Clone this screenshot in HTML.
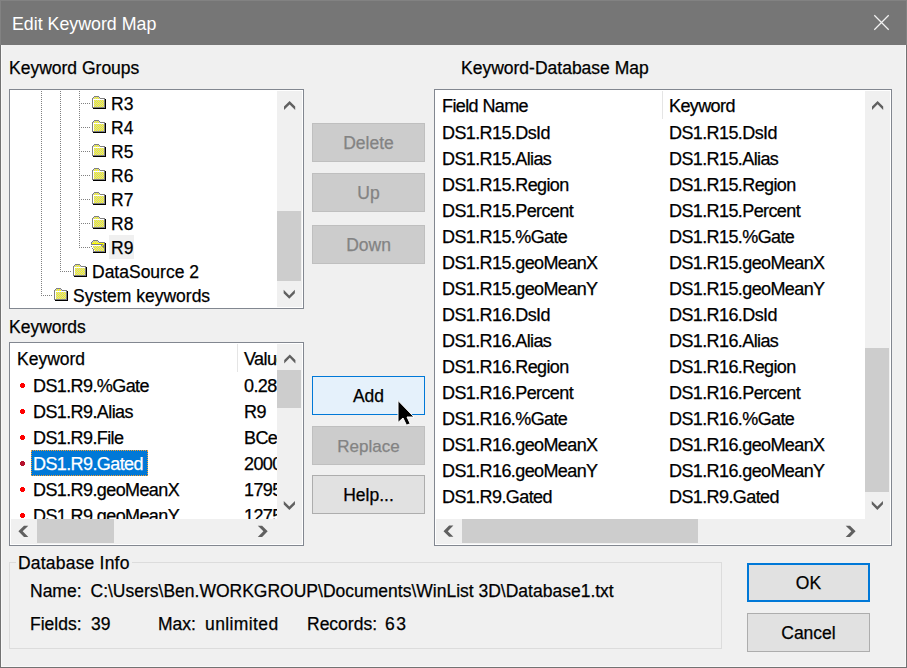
<!DOCTYPE html>
<html><head><meta charset="utf-8">
<style>
*{box-sizing:border-box;margin:0;padding:0}
html,body{width:907px;height:668px;overflow:hidden;background:#f0f0f0}
body{position:relative;font-family:"Liberation Sans",sans-serif;font-size:17px;line-height:20px;color:#000}
.a{position:absolute}
.t{position:absolute;white-space:pre;line-height:20px;font-size:17.5px;-webkit-text-stroke:0.25px currentColor}
.clip{position:absolute;overflow:hidden}
.btn{position:absolute;width:113px;height:39px;border:1px solid #adadad;background:#e1e1e1}
.dis{background:#cccccc;border-color:#bfbfbf}
.dot{position:absolute;width:6px;height:6px;border-radius:50%;background:#ff0000}
svg{overflow:visible}
</style></head><body>
<svg width="0" height="0" style="position:absolute">
<defs>
<pattern id="chk" width="2" height="2" patternUnits="userSpaceOnUse"><rect width="2" height="2" fill="#ffff00"/><rect x="1" y="0" width="1" height="1" fill="#c8c8c8"/><rect x="0" y="1" width="1" height="1" fill="#c8c8c8"/></pattern>
<symbol id="fold" viewBox="0 0 14 13">
<g shape-rendering="crispEdges">
<rect x="2" y="0" width="5" height="1" fill="#808080"/>
<rect x="1" y="1" width="1" height="1" fill="#808080"/>
<rect x="7" y="1" width="1" height="1" fill="#808080"/>
<rect x="2" y="1" width="5" height="2" fill="url(#chk)"/>
<rect x="1" y="2" width="1" height="1" fill="url(#chk)"/>
<rect x="7" y="2" width="1" height="1" fill="url(#chk)"/>
<rect x="0" y="2" width="1" height="10" fill="#808080"/>
<rect x="8" y="2" width="5" height="1" fill="#808080"/>
<rect x="12" y="2" width="1" height="10" fill="#808080"/>
<rect x="0" y="11" width="13" height="1" fill="#808080"/>
<rect x="1" y="3" width="11" height="1" fill="#ffffff"/>
<rect x="1" y="3" width="1" height="8" fill="#ffffff"/>
<rect x="2" y="4" width="10" height="7" fill="url(#chk)"/>
<rect x="13" y="3" width="1" height="10" fill="#000"/>
<rect x="1" y="12" width="13" height="1" fill="#000"/>
</g></symbol>
<symbol id="ofold" viewBox="0 0 15 13"><g shape-rendering="crispEdges"><rect x="2" y="0" width="5" height="1" fill="#808080"/><rect x="1" y="1" width="1" height="1" fill="#808080"/><rect x="2" y="1" width="5" height="1" fill="url(#chk)"/><rect x="7" y="1" width="1" height="1" fill="#808080"/><rect x="0" y="2" width="1" height="1" fill="#808080"/><rect x="1" y="2" width="7" height="1" fill="url(#chk)"/><rect x="8" y="2" width="6" height="1" fill="#808080"/><rect x="0" y="3" width="1" height="1" fill="#808080"/><rect x="1" y="3" width="12" height="1" fill="#ffff00"/><rect x="13" y="3" width="1" height="1" fill="#808080"/><rect x="14" y="3" width="1" height="1" fill="#000000"/><rect x="0" y="4" width="12" height="1" fill="#808080"/><rect x="12" y="4" width="1" height="1" fill="#ffff00"/><rect x="13" y="4" width="1" height="1" fill="#808080"/><rect x="14" y="4" width="1" height="1" fill="#000000"/><rect x="0" y="5" width="10" height="1" fill="#ffffff"/><rect x="10" y="5" width="1" height="1" fill="#808080"/><rect x="11" y="5" width="1" height="1" fill="#ffff00"/><rect x="12" y="5" width="2" height="1" fill="#808080"/><rect x="14" y="5" width="1" height="1" fill="#000000"/><rect x="0" y="6" width="1" height="1" fill="#808080"/><rect x="1" y="6" width="1" height="1" fill="#ffffff"/><rect x="2" y="6" width="9" height="1" fill="url(#chk)"/><rect x="11" y="6" width="3" height="1" fill="#808080"/><rect x="14" y="6" width="1" height="1" fill="#000000"/><rect x="1" y="7" width="1" height="1" fill="#808080"/><rect x="1" y="7" width="1" height="1" fill="#ffffff"/><rect x="2" y="7" width="10" height="1" fill="url(#chk)"/><rect x="12" y="7" width="2" height="1" fill="#808080"/><rect x="14" y="7" width="1" height="1" fill="#000000"/><rect x="1" y="8" width="1" height="1" fill="#808080"/><rect x="2" y="8" width="1" height="1" fill="#ffffff"/><rect x="3" y="8" width="10" height="1" fill="url(#chk)"/><rect x="13" y="8" width="1" height="1" fill="#808080"/><rect x="14" y="8" width="1" height="1" fill="#000000"/><rect x="2" y="9" width="1" height="1" fill="#808080"/><rect x="3" y="9" width="10" height="1" fill="url(#chk)"/><rect x="13" y="9" width="1" height="1" fill="#808080"/><rect x="14" y="9" width="1" height="1" fill="#000000"/><rect x="2" y="10" width="1" height="1" fill="#808080"/><rect x="3" y="10" width="1" height="1" fill="#ffffff"/><rect x="4" y="10" width="9" height="1" fill="url(#chk)"/><rect x="13" y="10" width="1" height="1" fill="#808080"/><rect x="14" y="10" width="1" height="1" fill="#000000"/><rect x="2" y="11" width="12" height="1" fill="#808080"/><rect x="14" y="11" width="1" height="1" fill="#000000"/><rect x="2" y="12" width="13" height="1" fill="#000000"/></g></symbol>
</defs></svg>

<div class="a" style="left:0px;top:0px;width:907px;height:45px;background:#767676;"></div>
<div class="t" style="left:12px;top:14.28px;font-size:17.8px;color:#ffffff;-webkit-text-stroke:0">Edit Keyword Map</div>
<svg class="a" style="left:873px;top:14px" width="17" height="17"><path d="M1.3 1.3L15.7 15.7M15.7 1.3L1.3 15.7" stroke="#f2f2f2" stroke-width="1.25" fill="none"/></svg>
<div class="a" style="left:0px;top:0px;width:907px;height:1px;background:#828282;"></div>
<div class="a" style="left:0px;top:0px;width:1px;height:45px;background:#828282;"></div>
<div class="a" style="left:906px;top:0px;width:1px;height:45px;background:#828282;"></div>
<div class="a" style="left:1px;top:45px;width:1px;height:622px;background:#f8f8f8;"></div>
<div class="a" style="left:905px;top:45px;width:1px;height:622px;background:#f8f8f8;"></div>
<div class="a" style="left:1px;top:666px;width:905px;height:1px;background:#f8f8f8;"></div>
<div class="a" style="left:0px;top:45px;width:1px;height:623px;background:#727272;"></div>
<div class="a" style="left:906px;top:45px;width:1px;height:623px;background:#727272;"></div>
<div class="a" style="left:0px;top:667px;width:907px;height:1px;background:#727272;"></div>
<div class="t" style="left:9px;top:57.55px;font-size:17.5px;">Keyword Groups</div>
<div class="t" style="left:461px;top:57.55px;font-size:17.5px;">Keyword-Database Map</div>
<div class="t" style="left:9px;top:316.55px;font-size:17.5px;">Keywords</div>
<div class="a" style="left:9px;top:89px;width:295px;height:220px;border:1px solid #828790;background:#fff"></div>
<svg class="a" style="left:0;top:0" width="907" height="668"><g shape-rendering="crispEdges" fill="#808080">
<rect x="41" y="91" width="1" height="1"/>
<rect x="41" y="93" width="1" height="1"/>
<rect x="41" y="95" width="1" height="1"/>
<rect x="41" y="97" width="1" height="1"/>
<rect x="41" y="99" width="1" height="1"/>
<rect x="41" y="101" width="1" height="1"/>
<rect x="41" y="103" width="1" height="1"/>
<rect x="41" y="105" width="1" height="1"/>
<rect x="41" y="107" width="1" height="1"/>
<rect x="41" y="109" width="1" height="1"/>
<rect x="41" y="111" width="1" height="1"/>
<rect x="41" y="113" width="1" height="1"/>
<rect x="41" y="115" width="1" height="1"/>
<rect x="41" y="117" width="1" height="1"/>
<rect x="41" y="119" width="1" height="1"/>
<rect x="41" y="121" width="1" height="1"/>
<rect x="41" y="123" width="1" height="1"/>
<rect x="41" y="125" width="1" height="1"/>
<rect x="41" y="127" width="1" height="1"/>
<rect x="41" y="129" width="1" height="1"/>
<rect x="41" y="131" width="1" height="1"/>
<rect x="41" y="133" width="1" height="1"/>
<rect x="41" y="135" width="1" height="1"/>
<rect x="41" y="137" width="1" height="1"/>
<rect x="41" y="139" width="1" height="1"/>
<rect x="41" y="141" width="1" height="1"/>
<rect x="41" y="143" width="1" height="1"/>
<rect x="41" y="145" width="1" height="1"/>
<rect x="41" y="147" width="1" height="1"/>
<rect x="41" y="149" width="1" height="1"/>
<rect x="41" y="151" width="1" height="1"/>
<rect x="41" y="153" width="1" height="1"/>
<rect x="41" y="155" width="1" height="1"/>
<rect x="41" y="157" width="1" height="1"/>
<rect x="41" y="159" width="1" height="1"/>
<rect x="41" y="161" width="1" height="1"/>
<rect x="41" y="163" width="1" height="1"/>
<rect x="41" y="165" width="1" height="1"/>
<rect x="41" y="167" width="1" height="1"/>
<rect x="41" y="169" width="1" height="1"/>
<rect x="41" y="171" width="1" height="1"/>
<rect x="41" y="173" width="1" height="1"/>
<rect x="41" y="175" width="1" height="1"/>
<rect x="41" y="177" width="1" height="1"/>
<rect x="41" y="179" width="1" height="1"/>
<rect x="41" y="181" width="1" height="1"/>
<rect x="41" y="183" width="1" height="1"/>
<rect x="41" y="185" width="1" height="1"/>
<rect x="41" y="187" width="1" height="1"/>
<rect x="41" y="189" width="1" height="1"/>
<rect x="41" y="191" width="1" height="1"/>
<rect x="41" y="193" width="1" height="1"/>
<rect x="41" y="195" width="1" height="1"/>
<rect x="41" y="197" width="1" height="1"/>
<rect x="41" y="199" width="1" height="1"/>
<rect x="41" y="201" width="1" height="1"/>
<rect x="41" y="203" width="1" height="1"/>
<rect x="41" y="205" width="1" height="1"/>
<rect x="41" y="207" width="1" height="1"/>
<rect x="41" y="209" width="1" height="1"/>
<rect x="41" y="211" width="1" height="1"/>
<rect x="41" y="213" width="1" height="1"/>
<rect x="41" y="215" width="1" height="1"/>
<rect x="41" y="217" width="1" height="1"/>
<rect x="41" y="219" width="1" height="1"/>
<rect x="41" y="221" width="1" height="1"/>
<rect x="41" y="223" width="1" height="1"/>
<rect x="41" y="225" width="1" height="1"/>
<rect x="41" y="227" width="1" height="1"/>
<rect x="41" y="229" width="1" height="1"/>
<rect x="41" y="231" width="1" height="1"/>
<rect x="41" y="233" width="1" height="1"/>
<rect x="41" y="235" width="1" height="1"/>
<rect x="41" y="237" width="1" height="1"/>
<rect x="41" y="239" width="1" height="1"/>
<rect x="41" y="241" width="1" height="1"/>
<rect x="41" y="243" width="1" height="1"/>
<rect x="41" y="245" width="1" height="1"/>
<rect x="41" y="247" width="1" height="1"/>
<rect x="41" y="249" width="1" height="1"/>
<rect x="41" y="251" width="1" height="1"/>
<rect x="41" y="253" width="1" height="1"/>
<rect x="41" y="255" width="1" height="1"/>
<rect x="41" y="257" width="1" height="1"/>
<rect x="41" y="259" width="1" height="1"/>
<rect x="41" y="261" width="1" height="1"/>
<rect x="41" y="263" width="1" height="1"/>
<rect x="41" y="265" width="1" height="1"/>
<rect x="41" y="267" width="1" height="1"/>
<rect x="41" y="269" width="1" height="1"/>
<rect x="41" y="271" width="1" height="1"/>
<rect x="41" y="273" width="1" height="1"/>
<rect x="41" y="275" width="1" height="1"/>
<rect x="41" y="277" width="1" height="1"/>
<rect x="41" y="279" width="1" height="1"/>
<rect x="41" y="281" width="1" height="1"/>
<rect x="41" y="283" width="1" height="1"/>
<rect x="41" y="285" width="1" height="1"/>
<rect x="41" y="287" width="1" height="1"/>
<rect x="41" y="289" width="1" height="1"/>
<rect x="41" y="291" width="1" height="1"/>
<rect x="41" y="293" width="1" height="1"/>
<rect x="41" y="295" width="1" height="1"/>
<rect x="60" y="91" width="1" height="1"/>
<rect x="60" y="93" width="1" height="1"/>
<rect x="60" y="95" width="1" height="1"/>
<rect x="60" y="97" width="1" height="1"/>
<rect x="60" y="99" width="1" height="1"/>
<rect x="60" y="101" width="1" height="1"/>
<rect x="60" y="103" width="1" height="1"/>
<rect x="60" y="105" width="1" height="1"/>
<rect x="60" y="107" width="1" height="1"/>
<rect x="60" y="109" width="1" height="1"/>
<rect x="60" y="111" width="1" height="1"/>
<rect x="60" y="113" width="1" height="1"/>
<rect x="60" y="115" width="1" height="1"/>
<rect x="60" y="117" width="1" height="1"/>
<rect x="60" y="119" width="1" height="1"/>
<rect x="60" y="121" width="1" height="1"/>
<rect x="60" y="123" width="1" height="1"/>
<rect x="60" y="125" width="1" height="1"/>
<rect x="60" y="127" width="1" height="1"/>
<rect x="60" y="129" width="1" height="1"/>
<rect x="60" y="131" width="1" height="1"/>
<rect x="60" y="133" width="1" height="1"/>
<rect x="60" y="135" width="1" height="1"/>
<rect x="60" y="137" width="1" height="1"/>
<rect x="60" y="139" width="1" height="1"/>
<rect x="60" y="141" width="1" height="1"/>
<rect x="60" y="143" width="1" height="1"/>
<rect x="60" y="145" width="1" height="1"/>
<rect x="60" y="147" width="1" height="1"/>
<rect x="60" y="149" width="1" height="1"/>
<rect x="60" y="151" width="1" height="1"/>
<rect x="60" y="153" width="1" height="1"/>
<rect x="60" y="155" width="1" height="1"/>
<rect x="60" y="157" width="1" height="1"/>
<rect x="60" y="159" width="1" height="1"/>
<rect x="60" y="161" width="1" height="1"/>
<rect x="60" y="163" width="1" height="1"/>
<rect x="60" y="165" width="1" height="1"/>
<rect x="60" y="167" width="1" height="1"/>
<rect x="60" y="169" width="1" height="1"/>
<rect x="60" y="171" width="1" height="1"/>
<rect x="60" y="173" width="1" height="1"/>
<rect x="60" y="175" width="1" height="1"/>
<rect x="60" y="177" width="1" height="1"/>
<rect x="60" y="179" width="1" height="1"/>
<rect x="60" y="181" width="1" height="1"/>
<rect x="60" y="183" width="1" height="1"/>
<rect x="60" y="185" width="1" height="1"/>
<rect x="60" y="187" width="1" height="1"/>
<rect x="60" y="189" width="1" height="1"/>
<rect x="60" y="191" width="1" height="1"/>
<rect x="60" y="193" width="1" height="1"/>
<rect x="60" y="195" width="1" height="1"/>
<rect x="60" y="197" width="1" height="1"/>
<rect x="60" y="199" width="1" height="1"/>
<rect x="60" y="201" width="1" height="1"/>
<rect x="60" y="203" width="1" height="1"/>
<rect x="60" y="205" width="1" height="1"/>
<rect x="60" y="207" width="1" height="1"/>
<rect x="60" y="209" width="1" height="1"/>
<rect x="60" y="211" width="1" height="1"/>
<rect x="60" y="213" width="1" height="1"/>
<rect x="60" y="215" width="1" height="1"/>
<rect x="60" y="217" width="1" height="1"/>
<rect x="60" y="219" width="1" height="1"/>
<rect x="60" y="221" width="1" height="1"/>
<rect x="60" y="223" width="1" height="1"/>
<rect x="60" y="225" width="1" height="1"/>
<rect x="60" y="227" width="1" height="1"/>
<rect x="60" y="229" width="1" height="1"/>
<rect x="60" y="231" width="1" height="1"/>
<rect x="60" y="233" width="1" height="1"/>
<rect x="60" y="235" width="1" height="1"/>
<rect x="60" y="237" width="1" height="1"/>
<rect x="60" y="239" width="1" height="1"/>
<rect x="60" y="241" width="1" height="1"/>
<rect x="60" y="243" width="1" height="1"/>
<rect x="60" y="245" width="1" height="1"/>
<rect x="60" y="247" width="1" height="1"/>
<rect x="60" y="249" width="1" height="1"/>
<rect x="60" y="251" width="1" height="1"/>
<rect x="60" y="253" width="1" height="1"/>
<rect x="60" y="255" width="1" height="1"/>
<rect x="60" y="257" width="1" height="1"/>
<rect x="60" y="259" width="1" height="1"/>
<rect x="60" y="261" width="1" height="1"/>
<rect x="60" y="263" width="1" height="1"/>
<rect x="60" y="265" width="1" height="1"/>
<rect x="60" y="267" width="1" height="1"/>
<rect x="60" y="269" width="1" height="1"/>
<rect x="60" y="271" width="1" height="1"/>
<rect x="79" y="91" width="1" height="1"/>
<rect x="79" y="93" width="1" height="1"/>
<rect x="79" y="95" width="1" height="1"/>
<rect x="79" y="97" width="1" height="1"/>
<rect x="79" y="99" width="1" height="1"/>
<rect x="79" y="101" width="1" height="1"/>
<rect x="79" y="103" width="1" height="1"/>
<rect x="79" y="105" width="1" height="1"/>
<rect x="79" y="107" width="1" height="1"/>
<rect x="79" y="109" width="1" height="1"/>
<rect x="79" y="111" width="1" height="1"/>
<rect x="79" y="113" width="1" height="1"/>
<rect x="79" y="115" width="1" height="1"/>
<rect x="79" y="117" width="1" height="1"/>
<rect x="79" y="119" width="1" height="1"/>
<rect x="79" y="121" width="1" height="1"/>
<rect x="79" y="123" width="1" height="1"/>
<rect x="79" y="125" width="1" height="1"/>
<rect x="79" y="127" width="1" height="1"/>
<rect x="79" y="129" width="1" height="1"/>
<rect x="79" y="131" width="1" height="1"/>
<rect x="79" y="133" width="1" height="1"/>
<rect x="79" y="135" width="1" height="1"/>
<rect x="79" y="137" width="1" height="1"/>
<rect x="79" y="139" width="1" height="1"/>
<rect x="79" y="141" width="1" height="1"/>
<rect x="79" y="143" width="1" height="1"/>
<rect x="79" y="145" width="1" height="1"/>
<rect x="79" y="147" width="1" height="1"/>
<rect x="79" y="149" width="1" height="1"/>
<rect x="79" y="151" width="1" height="1"/>
<rect x="79" y="153" width="1" height="1"/>
<rect x="79" y="155" width="1" height="1"/>
<rect x="79" y="157" width="1" height="1"/>
<rect x="79" y="159" width="1" height="1"/>
<rect x="79" y="161" width="1" height="1"/>
<rect x="79" y="163" width="1" height="1"/>
<rect x="79" y="165" width="1" height="1"/>
<rect x="79" y="167" width="1" height="1"/>
<rect x="79" y="169" width="1" height="1"/>
<rect x="79" y="171" width="1" height="1"/>
<rect x="79" y="173" width="1" height="1"/>
<rect x="79" y="175" width="1" height="1"/>
<rect x="79" y="177" width="1" height="1"/>
<rect x="79" y="179" width="1" height="1"/>
<rect x="79" y="181" width="1" height="1"/>
<rect x="79" y="183" width="1" height="1"/>
<rect x="79" y="185" width="1" height="1"/>
<rect x="79" y="187" width="1" height="1"/>
<rect x="79" y="189" width="1" height="1"/>
<rect x="79" y="191" width="1" height="1"/>
<rect x="79" y="193" width="1" height="1"/>
<rect x="79" y="195" width="1" height="1"/>
<rect x="79" y="197" width="1" height="1"/>
<rect x="79" y="199" width="1" height="1"/>
<rect x="79" y="201" width="1" height="1"/>
<rect x="79" y="203" width="1" height="1"/>
<rect x="79" y="205" width="1" height="1"/>
<rect x="79" y="207" width="1" height="1"/>
<rect x="79" y="209" width="1" height="1"/>
<rect x="79" y="211" width="1" height="1"/>
<rect x="79" y="213" width="1" height="1"/>
<rect x="79" y="215" width="1" height="1"/>
<rect x="79" y="217" width="1" height="1"/>
<rect x="79" y="219" width="1" height="1"/>
<rect x="79" y="221" width="1" height="1"/>
<rect x="79" y="223" width="1" height="1"/>
<rect x="79" y="225" width="1" height="1"/>
<rect x="79" y="227" width="1" height="1"/>
<rect x="79" y="229" width="1" height="1"/>
<rect x="79" y="231" width="1" height="1"/>
<rect x="79" y="233" width="1" height="1"/>
<rect x="79" y="235" width="1" height="1"/>
<rect x="79" y="237" width="1" height="1"/>
<rect x="79" y="239" width="1" height="1"/>
<rect x="79" y="241" width="1" height="1"/>
<rect x="79" y="243" width="1" height="1"/>
<rect x="79" y="245" width="1" height="1"/>
<rect x="79" y="247" width="1" height="1"/>
<rect x="81" y="103" width="1" height="1"/>
<rect x="83" y="103" width="1" height="1"/>
<rect x="85" y="103" width="1" height="1"/>
<rect x="87" y="103" width="1" height="1"/>
<rect x="89" y="103" width="1" height="1"/>
<rect x="81" y="127" width="1" height="1"/>
<rect x="83" y="127" width="1" height="1"/>
<rect x="85" y="127" width="1" height="1"/>
<rect x="87" y="127" width="1" height="1"/>
<rect x="89" y="127" width="1" height="1"/>
<rect x="81" y="151" width="1" height="1"/>
<rect x="83" y="151" width="1" height="1"/>
<rect x="85" y="151" width="1" height="1"/>
<rect x="87" y="151" width="1" height="1"/>
<rect x="89" y="151" width="1" height="1"/>
<rect x="81" y="175" width="1" height="1"/>
<rect x="83" y="175" width="1" height="1"/>
<rect x="85" y="175" width="1" height="1"/>
<rect x="87" y="175" width="1" height="1"/>
<rect x="89" y="175" width="1" height="1"/>
<rect x="81" y="199" width="1" height="1"/>
<rect x="83" y="199" width="1" height="1"/>
<rect x="85" y="199" width="1" height="1"/>
<rect x="87" y="199" width="1" height="1"/>
<rect x="89" y="199" width="1" height="1"/>
<rect x="81" y="223" width="1" height="1"/>
<rect x="83" y="223" width="1" height="1"/>
<rect x="85" y="223" width="1" height="1"/>
<rect x="87" y="223" width="1" height="1"/>
<rect x="89" y="223" width="1" height="1"/>
<rect x="81" y="247" width="1" height="1"/>
<rect x="83" y="247" width="1" height="1"/>
<rect x="85" y="247" width="1" height="1"/>
<rect x="87" y="247" width="1" height="1"/>
<rect x="89" y="247" width="1" height="1"/>
<rect x="62" y="271" width="1" height="1"/>
<rect x="64" y="271" width="1" height="1"/>
<rect x="66" y="271" width="1" height="1"/>
<rect x="68" y="271" width="1" height="1"/>
<rect x="70" y="271" width="1" height="1"/>
<rect x="43" y="295" width="1" height="1"/>
<rect x="45" y="295" width="1" height="1"/>
<rect x="47" y="295" width="1" height="1"/>
<rect x="49" y="295" width="1" height="1"/>
<rect x="51" y="295" width="1" height="1"/>
</g></svg>
<div class="a" style="left:109px;top:235px;width:25px;height:24px;background:#f0f0f0;"></div>
<svg class="a" style="left:92px;top:96px" width="14" height="13"><use href="#fold"/></svg>
<div class="t" style="left:111px;top:93.55px;font-size:17.5px;">R3</div>
<svg class="a" style="left:92px;top:120px" width="14" height="13"><use href="#fold"/></svg>
<div class="t" style="left:111px;top:117.55px;font-size:17.5px;">R4</div>
<svg class="a" style="left:92px;top:144px" width="14" height="13"><use href="#fold"/></svg>
<div class="t" style="left:111px;top:141.55px;font-size:17.5px;">R5</div>
<svg class="a" style="left:92px;top:168px" width="14" height="13"><use href="#fold"/></svg>
<div class="t" style="left:111px;top:165.55px;font-size:17.5px;">R6</div>
<svg class="a" style="left:92px;top:192px" width="14" height="13"><use href="#fold"/></svg>
<div class="t" style="left:111px;top:189.55px;font-size:17.5px;">R7</div>
<svg class="a" style="left:92px;top:216px" width="14" height="13"><use href="#fold"/></svg>
<div class="t" style="left:111px;top:213.55px;font-size:17.5px;">R8</div>
<svg class="a" style="left:91px;top:240px" width="15" height="13"><use href="#ofold"/></svg>
<div class="t" style="left:111px;top:237.55px;font-size:17.5px;">R9</div>
<svg class="a" style="left:73px;top:264px" width="14" height="13"><use href="#fold"/></svg>
<div class="t" style="left:92px;top:261.55px;font-size:17.5px;">DataSource 2</div>
<svg class="a" style="left:54px;top:288px" width="14" height="13"><use href="#fold"/></svg>
<div class="t" style="left:73px;top:285.55px;font-size:17.5px;">System keywords</div>
<div class="a" style="left:277px;top:91px;width:25px;height:216px;background:#f0f0f0;"></div>
<div class="a" style="left:277px;top:211px;width:24px;height:70px;background:#cdcdcd;"></div>
<svg class="a" style="left:281px;top:97px" width="16" height="16"><polygon points="3.00,9.60 8.60,4.00 14.20,9.60 14.20,13.00 8.60,7.40 3.00,13.00" fill="#606060"/></svg>
<svg class="a" style="left:281px;top:286px" width="16" height="16"><polygon points="2.65,7.20 8.25,12.80 13.85,7.20 13.85,3.80 8.25,9.40 2.65,3.80" fill="#606060"/></svg>
<div class="a" style="left:9px;top:342px;width:295px;height:204px;border:1px solid #828790;background:#fff"></div>
<div class="clip" style="left:10px;top:343px;width:267px;height:176px">
</div>
<div class="t" style="left:17px;top:348.55px;font-size:17.5px;">Keyword</div>
<div class="a" style="left:237px;top:344px;width:1px;height:28px;background:#e5e5e5;"></div>
<div class="clip" style="left:10px;top:343px;width:267px;height:176px">
<div class="t" style="left:234px;top:6px;font-size:18px;letter-spacing:-0.6px;">Value</div>
<div class="a" style="left:10px;top:41px;width:5px;height:3px;background:#ff0000"></div>
<div class="a" style="left:11px;top:40px;width:3px;height:5px;background:#ff0000"></div>
<div class="t" style="left:23px;top:33px;font-size:18px;letter-spacing:-0.6px;">DS1.R9.%Gate</div>
<div class="t" style="left:234px;top:33px;font-size:18px;letter-spacing:-0.6px;">0.2834</div>
<div class="a" style="left:10px;top:67px;width:5px;height:3px;background:#ff0000"></div>
<div class="a" style="left:11px;top:66px;width:3px;height:5px;background:#ff0000"></div>
<div class="t" style="left:23px;top:59px;font-size:18px;letter-spacing:-0.6px;">DS1.R9.Alias</div>
<div class="t" style="left:234px;top:59px;font-size:18px;letter-spacing:-0.6px;">R9</div>
<div class="a" style="left:10px;top:93px;width:5px;height:3px;background:#ff0000"></div>
<div class="a" style="left:11px;top:92px;width:3px;height:5px;background:#ff0000"></div>
<div class="t" style="left:23px;top:85px;font-size:18px;letter-spacing:-0.6px;">DS1.R9.File</div>
<div class="t" style="left:234px;top:85px;font-size:18px;letter-spacing:-0.6px;">BCell</div>
<div class="a" style="left:21px;top:107px;width:117px;height:26px;background:#0078d7;outline:1px dotted #f7a030;outline-offset:-1px"></div>
<div class="a" style="left:10px;top:119px;width:5px;height:3px;background:#b5122e"></div>
<div class="a" style="left:11px;top:118px;width:3px;height:5px;background:#b5122e"></div>
<div class="t" style="left:23px;top:111px;font-size:18px;letter-spacing:-0.6px;color:#ffffff;">DS1.R9.Gated</div>
<div class="t" style="left:234px;top:111px;font-size:18px;letter-spacing:-0.6px;">2000</div>
<div class="a" style="left:10px;top:145px;width:5px;height:3px;background:#ff0000"></div>
<div class="a" style="left:11px;top:144px;width:3px;height:5px;background:#ff0000"></div>
<div class="t" style="left:23px;top:137px;font-size:18px;letter-spacing:-0.6px;">DS1.R9.geoMeanX</div>
<div class="t" style="left:234px;top:137px;font-size:18px;letter-spacing:-0.6px;">1795</div>
<div class="a" style="left:10px;top:171px;width:5px;height:3px;background:#ff0000"></div>
<div class="a" style="left:11px;top:170px;width:3px;height:5px;background:#ff0000"></div>
<div class="t" style="left:23px;top:163px;font-size:18px;letter-spacing:-0.6px;">DS1.R9.geoMeanY</div>
<div class="t" style="left:234px;top:163px;font-size:18px;letter-spacing:-0.6px;">1275</div>
</div>
<div class="a" style="left:277px;top:344px;width:25px;height:175px;background:#f0f0f0;"></div>
<div class="a" style="left:277px;top:370px;width:24px;height:38px;background:#cdcdcd;"></div>
<svg class="a" style="left:281px;top:350px" width="16" height="16"><polygon points="3.20,10.00 8.80,4.40 14.40,10.00 14.40,13.40 8.80,7.80 3.20,13.40" fill="#606060"/></svg>
<svg class="a" style="left:281px;top:497px" width="16" height="16"><polygon points="2.75,7.40 8.35,13.00 13.95,7.40 13.95,4.00 8.35,9.60 2.75,4.00" fill="#606060"/></svg>
<div class="a" style="left:11px;top:519px;width:291px;height:25px;background:#f0f0f0;"></div>
<div class="a" style="left:37px;top:519px;width:77px;height:24px;background:#cdcdcd;"></div>
<svg class="a" style="left:254px;top:523px" width="16" height="16"><polygon points="8.10,2.70 13.70,8.30 8.10,13.90 3.80,13.90 9.40,8.30 3.80,2.70" fill="#606060"/></svg>
<svg class="a" style="left:15px;top:523px" width="16" height="16"><polygon points="9.00,2.70 3.40,8.30 9.00,13.90 13.30,13.90 7.70,8.30 13.30,2.70" fill="#606060"/></svg>
<div class="a" style="left:312px;top:123px;width:113px;height:39px;background:#cccccc;border:1px solid #bfbfbf"></div>
<div class="t" style="left:312px;top:133px;width:113px;text-align:center;color:#838383">Delete</div>
<div class="a" style="left:312px;top:173px;width:113px;height:39px;background:#cccccc;border:1px solid #bfbfbf"></div>
<div class="t" style="left:312px;top:183px;width:113px;text-align:center;color:#838383">Up</div>
<div class="a" style="left:312px;top:225px;width:113px;height:39px;background:#cccccc;border:1px solid #bfbfbf"></div>
<div class="t" style="left:312px;top:235px;width:113px;text-align:center;color:#838383">Down</div>
<div class="a" style="left:312px;top:376px;width:113px;height:39px;background:#e5f1fb;border:1px solid #0078d7"></div>
<div class="t" style="left:312px;top:386px;width:113px;text-align:center;color:#000">Add</div>
<div class="a" style="left:312px;top:426px;width:113px;height:39px;background:#cccccc;border:1px solid #bfbfbf"></div>
<div class="t" style="left:312px;top:436px;width:113px;text-align:center;color:#838383"><span style="font-size:17px">Replace</span></div>
<div class="a" style="left:312px;top:475px;width:113px;height:39px;background:#e1e1e1;border:1px solid #adadad"></div>
<div class="t" style="left:312px;top:485px;width:113px;text-align:center;color:#000">Help...</div>
<div class="a" style="left:434px;top:89px;width:458px;height:457px;border:1px solid #828790;background:#fff"></div>
<div class="clip" style="left:435px;top:90px;width:430px;height:429px">
<div class="t" style="left:7px;top:6px;font-size:18px;letter-spacing:-0.6px">Field Name</div>
<div class="a" style="left:227px;top:1px;width:1px;height:28px;background:#e5e5e5"></div>
<div class="t" style="left:234px;top:6px;font-size:18px;letter-spacing:-0.6px">Keyword</div>
<div class="t" style="left:7px;top:33px;font-size:18px;letter-spacing:-0.6px">DS1.R15.DsId</div>
<div class="t" style="left:234px;top:33px;font-size:18px;letter-spacing:-0.6px">DS1.R15.DsId</div>
<div class="t" style="left:7px;top:59px;font-size:18px;letter-spacing:-0.6px">DS1.R15.Alias</div>
<div class="t" style="left:234px;top:59px;font-size:18px;letter-spacing:-0.6px">DS1.R15.Alias</div>
<div class="t" style="left:7px;top:85px;font-size:18px;letter-spacing:-0.6px">DS1.R15.Region</div>
<div class="t" style="left:234px;top:85px;font-size:18px;letter-spacing:-0.6px">DS1.R15.Region</div>
<div class="t" style="left:7px;top:111px;font-size:18px;letter-spacing:-0.6px">DS1.R15.Percent</div>
<div class="t" style="left:234px;top:111px;font-size:18px;letter-spacing:-0.6px">DS1.R15.Percent</div>
<div class="t" style="left:7px;top:137px;font-size:18px;letter-spacing:-0.6px">DS1.R15.%Gate</div>
<div class="t" style="left:234px;top:137px;font-size:18px;letter-spacing:-0.6px">DS1.R15.%Gate</div>
<div class="t" style="left:7px;top:163px;font-size:18px;letter-spacing:-0.6px">DS1.R15.geoMeanX</div>
<div class="t" style="left:234px;top:163px;font-size:18px;letter-spacing:-0.6px">DS1.R15.geoMeanX</div>
<div class="t" style="left:7px;top:189px;font-size:18px;letter-spacing:-0.6px">DS1.R15.geoMeanY</div>
<div class="t" style="left:234px;top:189px;font-size:18px;letter-spacing:-0.6px">DS1.R15.geoMeanY</div>
<div class="t" style="left:7px;top:215px;font-size:18px;letter-spacing:-0.6px">DS1.R16.DsId</div>
<div class="t" style="left:234px;top:215px;font-size:18px;letter-spacing:-0.6px">DS1.R16.DsId</div>
<div class="t" style="left:7px;top:241px;font-size:18px;letter-spacing:-0.6px">DS1.R16.Alias</div>
<div class="t" style="left:234px;top:241px;font-size:18px;letter-spacing:-0.6px">DS1.R16.Alias</div>
<div class="t" style="left:7px;top:267px;font-size:18px;letter-spacing:-0.6px">DS1.R16.Region</div>
<div class="t" style="left:234px;top:267px;font-size:18px;letter-spacing:-0.6px">DS1.R16.Region</div>
<div class="t" style="left:7px;top:293px;font-size:18px;letter-spacing:-0.6px">DS1.R16.Percent</div>
<div class="t" style="left:234px;top:293px;font-size:18px;letter-spacing:-0.6px">DS1.R16.Percent</div>
<div class="t" style="left:7px;top:319px;font-size:18px;letter-spacing:-0.6px">DS1.R16.%Gate</div>
<div class="t" style="left:234px;top:319px;font-size:18px;letter-spacing:-0.6px">DS1.R16.%Gate</div>
<div class="t" style="left:7px;top:345px;font-size:18px;letter-spacing:-0.6px">DS1.R16.geoMeanX</div>
<div class="t" style="left:234px;top:345px;font-size:18px;letter-spacing:-0.6px">DS1.R16.geoMeanX</div>
<div class="t" style="left:7px;top:371px;font-size:18px;letter-spacing:-0.6px">DS1.R16.geoMeanY</div>
<div class="t" style="left:234px;top:371px;font-size:18px;letter-spacing:-0.6px">DS1.R16.geoMeanY</div>
<div class="t" style="left:7px;top:397px;font-size:18px;letter-spacing:-0.6px">DS1.R9.Gated</div>
<div class="t" style="left:234px;top:397px;font-size:18px;letter-spacing:-0.6px">DS1.R9.Gated</div>
</div>
<div class="a" style="left:865px;top:91px;width:25px;height:428px;background:#f0f0f0;"></div>
<div class="a" style="left:865px;top:348px;width:24px;height:144px;background:#cdcdcd;"></div>
<svg class="a" style="left:869px;top:97px" width="16" height="16"><polygon points="3.00,9.50 8.60,3.90 14.20,9.50 14.20,12.90 8.60,7.30 3.00,12.90" fill="#606060"/></svg>
<svg class="a" style="left:869px;top:497px" width="16" height="16"><polygon points="2.75,7.30 8.35,12.90 13.95,7.30 13.95,3.90 8.35,9.50 2.75,3.90" fill="#606060"/></svg>
<div class="a" style="left:436px;top:519px;width:454px;height:25px;background:#f0f0f0;"></div>
<div class="a" style="left:462px;top:519px;width:236px;height:24px;background:#cdcdcd;"></div>
<svg class="a" style="left:440px;top:523px" width="16" height="16"><polygon points="9.10,2.60 3.50,8.20 9.10,13.80 13.40,13.80 7.80,8.20 13.40,2.60" fill="#606060"/></svg>
<svg class="a" style="left:842px;top:523px" width="16" height="16"><polygon points="8.00,2.70 13.60,8.30 8.00,13.90 3.70,13.90 9.30,8.30 3.70,2.70" fill="#606060"/></svg>
<div class="a" style="left:9px;top:562px;width:713px;height:87px;border:1px solid #dcdcdc"></div>
<div class="a" style="left:16px;top:555px;width:116px;height:14px;background:#f0f0f0;"></div>
<div class="t" style="left:18px;top:552.55px;font-size:17.5px;letter-spacing:0.2px">Database Info</div>
<div class="t" style="left:30px;top:580.55px;font-size:17.5px;">Name:</div>
<div class="t" style="left:90.5px;top:580.55px;font-size:17.5px;">C:\Users\Ben.WORKGROUP\Documents\WinList 3D\Database1.txt</div>
<div class="t" style="left:30px;top:613.55px;font-size:17.5px;">Fields:</div>
<div class="t" style="left:91px;top:613.55px;font-size:17.5px;">39</div>
<div class="t" style="left:158px;top:613.55px;font-size:17.5px;">Max:</div>
<div class="t" style="left:205px;top:613.55px;font-size:17.5px;letter-spacing:0.4px">unlimited</div>
<div class="t" style="left:307px;top:613.55px;font-size:17.5px;">Records:</div>
<div class="t" style="left:385px;top:613.55px;font-size:17.5px;letter-spacing:1.5px">63</div>
<div class="a" style="left:747px;top:563px;width:123px;height:39px;background:#e1e1e1;border:2px solid #0078d7"></div>
<div class="t" style="left:747px;top:573px;width:123px;text-align:center;color:#000">OK</div>
<div class="a" style="left:747px;top:613px;width:123px;height:39px;background:#e1e1e1;border:1px solid #adadad"></div>
<div class="t" style="left:747px;top:623px;width:123px;text-align:center;color:#000">Cancel</div>
<svg class="a" style="left:396px;top:398px" width="20" height="30" viewBox="0 0 20 30"><path d="M2 2.5 L2 24.5 L7 20 L10.5 27.2 L14.2 25.7 L11 19 L18 19 Z" fill="#000" stroke="#fff" stroke-width="1" stroke-linejoin="miter"/></svg>
</body></html>
